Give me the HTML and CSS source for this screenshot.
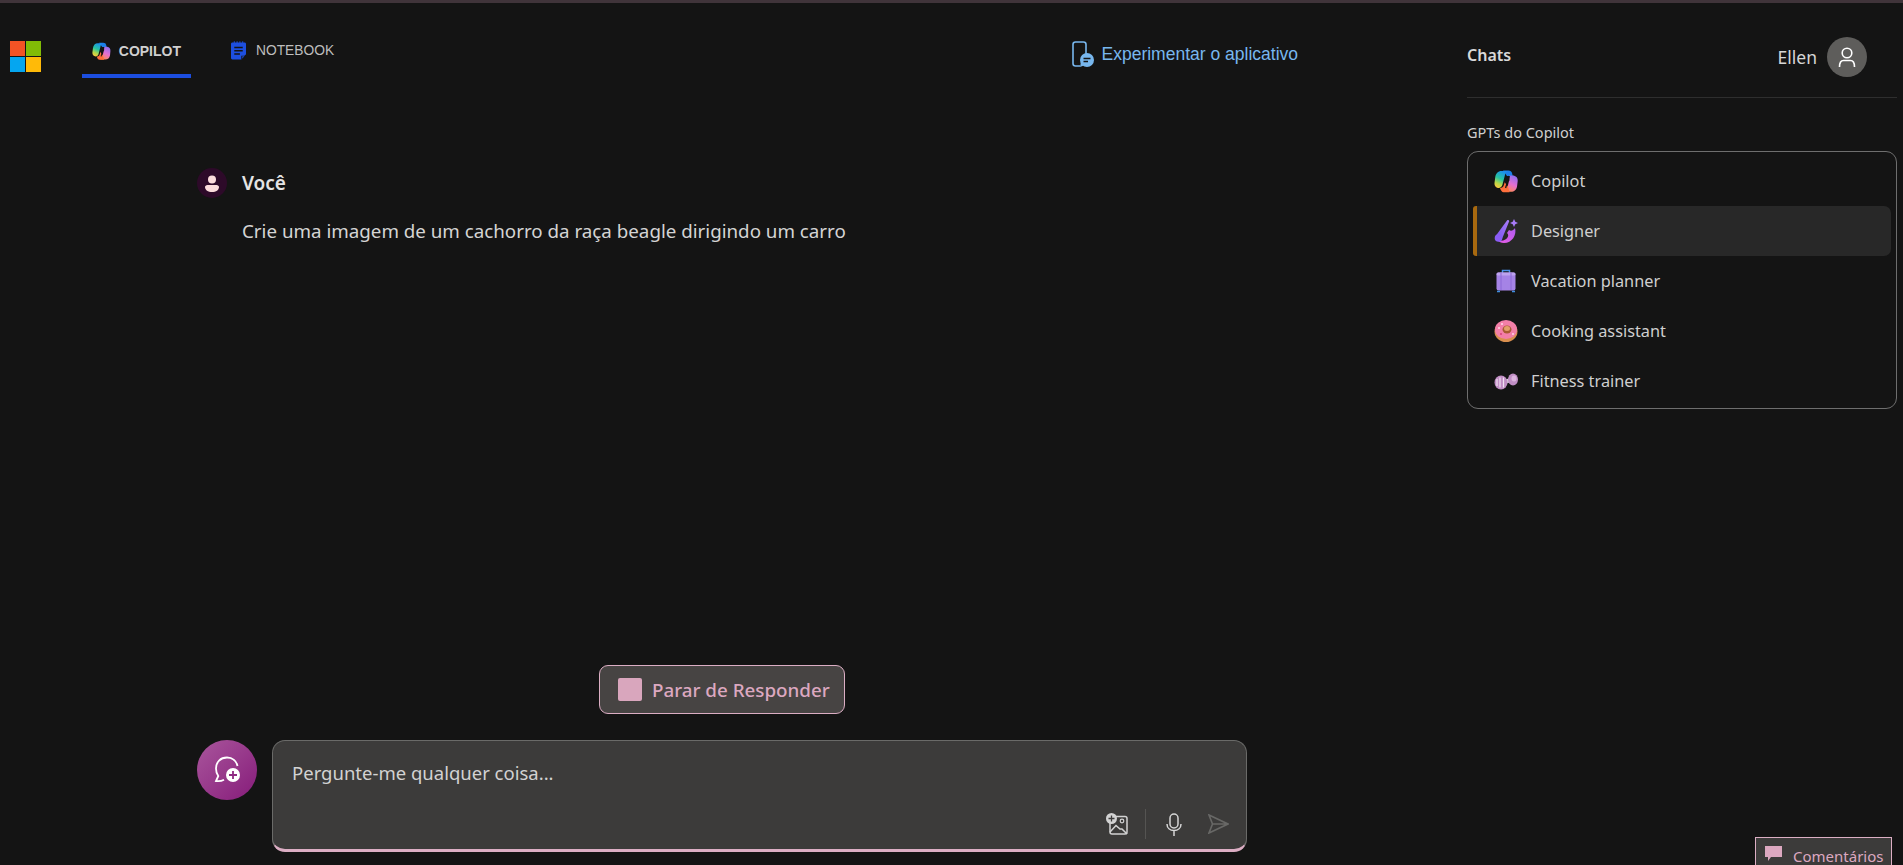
FILE: index.html
```html
<!DOCTYPE html>
<html lang="pt-BR">

<head>
    <meta charset="UTF-8">
    <title>Copilot</title>
    <link rel="stylesheet" href="styles.css">
</head>

<body>
    <svg class="defs" width="0" height="0">
        <defs>
            <linearGradient id="copLeft" x1="0.6" y1="0" x2="0.2" y2="1">
                <stop offset="0" stop-color="#1b8cf0" />
                <stop offset="0.45" stop-color="#27c4a0" />
                <stop offset="0.75" stop-color="#b7d84a" />
                <stop offset="1" stop-color="#ffc83d" />
            </linearGradient>
            <linearGradient id="copRight" x1="0.7" y1="0" x2="0.3" y2="1">
                <stop offset="0" stop-color="#8f6ff0" />
                <stop offset="0.5" stop-color="#e46fd0" />
                <stop offset="1" stop-color="#ff8a4c" />
            </linearGradient>
            <linearGradient id="wand" x1="0" y1="1" x2="1" y2="0">
                <stop offset="0" stop-color="#7d55f0" />
                <stop offset="1" stop-color="#a87cf8" />
            </linearGradient>
            <linearGradient id="bowl" x1="1" y1="0" x2="0" y2="1">
                <stop offset="0" stop-color="#b05cf0" />
                <stop offset="1" stop-color="#e95ce6" />
            </linearGradient>
            <symbol id="copilotLogo" viewBox="0 0 24 24">
                <path fill="#1b7fea" d="M9 1.500h5.500c1.800 0 3 .9 3.500 2.500l.8 3H13z" />
                <path fill="url(#copLeft)" d="M7.500 2h7c-1.500 0-2.700 1-3.200 2.800L8.500 15.500C7.900 17.800 6.500 19 4.800 19 2 19 .3 16.800 .5 14l.7-5.500C1.700 4.500 4 2 7.500 2z" />
                <path fill="url(#copRight)" d="M15.500 6.500h3c3.300 0 5.500 2.300 5.200 5.500l-.6 5c-.4 3.800-3 5.800-6.100 5.800H9.500c1.800 0 3-1 3.500-2.800l2-8c.1-.2.200-.3.500-.5z" />
                <path fill="#ff6f3c" d="M6 19c2 0 3.400-1.100 4-3.300l.7-2.500 3.300 4.500 1.500 5.600H9.500C8 23.300 6.800 21.500 6 19z" />
                <path stroke="#141414" stroke-width="1.300" d="M15.200 7l-3.600 12" />
            </symbol>
        </defs>
    </svg>

    <div class="topStrip"></div>

    <div class="page">
        <div class="mainCol">
            <div class="header">
                <svg class="msLogo" viewBox="0 0 31 31">
                    <rect width="15" height="15" fill="#f35325" />
                    <rect x="16" width="15" height="15" fill="#81bc06" />
                    <rect y="16" width="15" height="15" fill="#05a6f0" />
                    <rect x="16" y="16" width="15" height="15" fill="#ffba08" />
                </svg>
                <div class="tab tabActive">
                    <svg class="tabIcon" viewBox="0 0 24 24"><use href="#copilotLogo" /></svg>
                    <span>COPILOT</span>
                </div>
                <div class="tab">
                    <svg class="noteIcon" viewBox="0 0 16 20">
                        <path fill="#1d4fe0" d="M1.500 1.500H3V0h1v1.500h2V0h1v1.500h2V0h1v1.500h2V0h1v1.500h1.500c.8 0 1.500.7 1.500 1.500v11l-5 5.500H1.500C.7 19.500 0 18.800 0 18V3c0-.8.700-1.500 1.500-1.500z" />
                        <path fill="#141414" d="M3.500 6h9v1.500h-9zM3.500 9.500h9V11h-9zM3.500 13h6v1.500h-6zM11 19.500v-4h5z" />
                        <path fill="#1d4fe0" d="M12 18.500V16.200h2.300z" />
                    </svg>
                    <span>NOTEBOOK</span>
                </div>
                <div class="appLink">
                    <svg class="appIcon" viewBox="0 0 22 26" fill="none">
                        <path stroke="#78b7ee" stroke-width="1.600" d="M8 25H3.500C2 25 1 24 1 22.500V3.500C1 2 2 1 3.500 1h8C13 1 14 2 14 3.500V13" />
                        <circle cx="15" cy="19" r="7" fill="#78b7ee" />
                        <path fill="#78b7ee" d="M8 26l1-5 4 3z" />
                        <path stroke="#141414" stroke-width="1.500" d="M11.500 17.500h7M11.500 20.500h4.500" />
                    </svg>
                    <span>Experimentar o aplicativo</span>
                </div>
            </div>

            <div class="chat">
                <div class="msgHead">
                    <div class="youAvatar">
                        <svg width="14" height="17" viewBox="0 0 14 17">
                            <circle cx="7" cy="4.500" r="4" fill="#fbdcdc" />
                            <path fill="#fbdcdc" d="M2.500 10h9c1.400 0 2.500 1 2.500 2 0 3-3 5-7 5s-7-2-7-5c0-1 1.100-2 2.500-2z" />
                        </svg>
                    </div>
                    <span class="youName">Você</span>
                </div>
                <p class="msgText">Crie uma imagem de um cachorro da raça beagle dirigindo um carro</p>
            </div>

            <div class="composer">
                <div class="stopBtn">
                    <span class="stopSquare"></span>
                    <span>Parar de Responder</span>
                </div>
                <div class="inputRow">
                    <div class="newTopic">
                        <svg width="28" height="28" viewBox="0 0 28 28" fill="none">
                            <path stroke="#fff" stroke-width="1.800" d="M14 1.500C7.500 1.500 3 6 3 12.500c0 3 .8 5.500 2.300 7.500L3 25c3 .4 6-.2 8-1.300" />
                            <path stroke="#fff" stroke-width="1.800" d="M14 1.500c5.500 0 9.500 3.500 10.500 8.500" />
                            <circle cx="20" cy="19" r="7" fill="#fff" />
                            <path stroke="#8f2a82" stroke-width="1.800" d="M20 15v8M16 19h8" />
                        </svg>
                    </div>
                    <div class="inputBox">
                        <div class="placeholder">Pergunte-me qualquer coisa...</div>
                        <div class="actions">
                            <svg class="imgIcon" viewBox="0 0 22 22" fill="none">
                                <rect x="4" y="3.500" width="17" height="17.500" rx="2" stroke="#d2d2d2" stroke-width="1.500" />
                                <path stroke="#d2d2d2" stroke-width="1.500" d="M4 19l6-6.500 4 3.500 2 0 5 5" />
                                <circle cx="16" cy="8" r="1.800" stroke="#d2d2d2" stroke-width="1.200" />
                                <circle cx="5.500" cy="5.500" r="5.500" fill="#d2d2d2" />
                                <path stroke="#3c3b3a" stroke-width="1.300" d="M5.500 2.500v6M2.500 5.500h6" />
                            </svg>
                            <span class="actionSep"></span>
                            <svg class="micIcon" viewBox="0 0 16 23" fill="none" stroke="#d6d6d6" stroke-width="1.500">
                                <rect x="4" y="1" width="8" height="14" rx="4" />
                                <path d="M1 11c0 4 3 6.500 7 6.500s7-2.500 7-6.500M8 17.500V23" />
                            </svg>
                            <svg class="sendIcon" viewBox="0 0 21 20" fill="none" stroke="#686866" stroke-width="1.600">
                                <path d="M1 1l19 9-19 9 3.500-9zM4.500 10H20" />
                            </svg>
                        </div>
                    </div>
                </div>
            </div>
        </div>

        <div class="side">
            <div class="sideHead">
                <span class="chatsTitle">Chats</span>
                <span class="userName">Ellen</span>
                <div class="userAvatar">
                    <svg width="20" height="20" viewBox="0 0 20 20" fill="none" stroke="#fff" stroke-width="1.600">
                        <circle cx="10" cy="6" r="4.800" />
                        <path d="M2.500 20c0-4 1.500-6.500 4-6.500h7c2.500 0 4 2.500 4 6.500" />
                    </svg>
                </div>
            </div>
            <div class="gptLabel">GPTs do Copilot</div>
            <div class="gptCard">
                <div class="gptRow">
                    <svg class="gptIcon" viewBox="0 0 24 24"><use href="#copilotLogo" /></svg>
                    <span>Copilot</span>
                </div>
                <div class="gptRow gptActive">
                    <svg class="gptIcon" viewBox="0 0 24 24">
                        <path fill="url(#bowl)" d="M21 9c2 7-3 15-11 15-3 0-5-1-6-2.500 5 1 9-1 10-4 .5-1.500 0-2.500-1-3.500l2-3c2 1.200 4 .8 6-2z" />
                        <path fill="url(#wand)" d="M2 16.500L13 1.500c.8-1 2.500-.2 2.100 1L8 20z" />
                        <circle cx="4.500" cy="19" r="3.800" fill="#8a5cf5" />
                        <path fill="#a87cf8" d="M20 0l1.300 2.700L24 4l-2.700 1.300L20 8l-1.300-2.700L16 4l2.700-1.300z" />
                    </svg>
                    <span>Designer</span>
                </div>
                <div class="gptRow">
                    <svg class="gptIcon" viewBox="0 0 24 24" fill="none">
                        <path stroke="#4a90e8" stroke-width="1.500" d="M8.500 4V1.500h7V4" />
                        <rect x="2.500" y="3.500" width="19" height="18" rx="2" fill="#a583e6" />
                        <rect x="2.500" y="3.500" width="19" height="3" rx="1.500" fill="#bda2ee" />
                        <path stroke="#8c69d6" d="M7 4v17M17 4v17" />
                        <path stroke="#3f8fe0" stroke-width="1.500" d="M3 22.500h3M18 22.500h3" />
                    </svg>
                    <span>Vacation planner</span>
                </div>
                <div class="gptRow">
                    <svg class="gptIcon" viewBox="0 0 24 24">
                        <ellipse cx="12" cy="12.500" rx="11.500" ry="10.500" fill="#d98f4e" />
                        <ellipse cx="12" cy="10.500" rx="11" ry="9.500" fill="#f37fa8" />
                        <ellipse cx="13" cy="10.500" rx="4.500" ry="4" fill="#a85a32" />
                        <ellipse cx="13" cy="9.500" rx="3" ry="2.500" fill="#e4a06a" />
                        <circle cx="5" cy="9" r="1" fill="#ffd7e6" />
                        <circle cx="8" cy="5" r="1" fill="#ffd7e6" />
                        <circle cx="19" cy="15" r="1" fill="#ffd7e6" />
                        <circle cx="7" cy="15" r="1" fill="#d63f7c" />
                    </svg>
                    <span>Cooking assistant</span>
                </div>
                <div class="gptRow">
                    <svg class="gptIcon" viewBox="0 0 24 24">
                        <path stroke="#d8d0dc" stroke-width="4" d="M10 13l7-2" />
                        <ellipse cx="7" cy="13.500" rx="6.500" ry="7" fill="#c08ec4" />
                        <path stroke="#f0dff2" stroke-width="1.200" d="M3 10v7M6 8.500v10M9.500 8.500v10" />
                        <ellipse cx="19" cy="10.500" rx="5" ry="6" fill="#c08ec4" />
                        <ellipse cx="20" cy="9.500" rx="2.500" ry="3" fill="#dcb4de" />
                    </svg>
                    <span>Fitness trainer</span>
                </div>
            </div>
        </div>
    </div>

    <div class="feedback">
        <svg width="17" height="15" viewBox="0 0 17 15">
            <path fill="#dca8c0" d="M0 0h17v11H6l-3 4v-4H0z" />
        </svg>
        <span>Comentários</span>
    </div>
</body>
</html>
```

FILE: styles.css
```css
* {
    margin: 0;
    padding: 0;
    box-sizing: border-box;
}

html, body {
    height: 100%;
    overflow: hidden;
}

body {
    background-color: #141414;
    color: #d4d4d4;
    font-family: "Noto Sans", "Liberation Sans", sans-serif;
    display: flex;
    flex-direction: column;
}

.defs {
    position: absolute;
}

.topStrip {
    height: 3px;
    background-color: #40343a;
}

.page {
    flex: 1;
    display: flex;
    min-height: 0;
}

.mainCol {
    width: 1467px;
    display: flex;
    flex-direction: column;
}

.header {
    height: 75px;
    display: flex;
    align-items: flex-end;
    padding-left: 10px;
    padding-right: 169px;
    font-family: "Liberation Sans", sans-serif;
}

.msLogo {
    width: 31px;
    height: 31px;
    margin-bottom: 6px;
}

.tab {
    height: 51px;
    display: flex;
    align-items: center;
    gap: 10px;
    padding: 0 10px;
    margin-left: 30px;
    border-bottom: 4px solid transparent;
    font-size: 13.8px;
    color: #bdbdbd;
}

.tabActive {
    width: 109px;
    margin-left: 41px;
    gap: 8px;
    border-bottom-color: #1c4ee0;
    font-weight: bold;
    font-size: 14px;
    color: #d0d0d0;
}

.tabIcon {
    width: 20px;
    height: 20px;
}

.noteIcon {
    width: 15px;
    height: 19px;
}

.appLink {
    margin-left: auto;
    margin-bottom: 11px;
    display: flex;
    align-items: center;
    gap: 8px;
    color: #78b7ee;
    font-size: 17.5px;
}

.appIcon {
    width: 22px;
    height: 26px;
}

.chat {
    flex: 1;
    padding: 90px 0 0 197px;
}

.msgHead {
    display: flex;
    align-items: center;
    gap: 15px;
}

.youAvatar {
    width: 30px;
    height: 30px;
    border-radius: 50%;
    background-color: #2d0a29;
    display: flex;
    align-items: center;
    justify-content: center;
}

.youName {
    font-size: 19px;
    font-weight: 600;
    color: #e4e4e4;
}

.msgText {
    margin: 21px 0 0 45px;
    font-size: 18.75px;
    line-height: 24px;
}

.composer {
    width: 1050px;
    margin-left: 197px;
    padding-bottom: 13px;
    display: flex;
    flex-direction: column;
}

.stopBtn {
    align-self: center;
    width: 246px;
    height: 49px;
    display: flex;
    align-items: center;
    gap: 10px;
    padding-left: 18px;
    border: 1px solid #dcaec4;
    border-radius: 9px;
    background-color: #474443;
    color: #dca8c0;
    font-size: 18.8px;
    font-weight: 500;
}

.stopSquare {
    width: 24px;
    height: 23px;
    border-radius: 2px;
    background-color: #d9a6bd;
}

.inputRow {
    display: flex;
    gap: 15px;
    margin-top: 26px;
}

.newTopic {
    width: 60px;
    height: 60px;
    border-radius: 50%;
    background: linear-gradient(135deg, #a9569c, #861c7a);
    display: flex;
    align-items: center;
    justify-content: center;
}

.inputBox {
    flex: 1;
    height: 112px;
    display: flex;
    flex-direction: column;
    justify-content: space-between;
    padding: 20px 17px 10px 19px;
    border: 1px solid #6a6a68;
    border-bottom: 3px solid #dcaec4;
    border-radius: 13px;
    background-color: #3c3b3a;
}

.placeholder {
    font-size: 18.5px;
    line-height: 24px;
    color: #d2d2d2;
}

.actions {
    display: flex;
    justify-content: flex-end;
    align-items: center;
}

.imgIcon {
    width: 22px;
    height: 22px;
}

.actionSep {
    width: 1px;
    height: 30px;
    margin: 0 20px 0 17px;
    background-color: #555452;
}

.micIcon {
    width: 16px;
    height: 23px;
    margin-right: 26px;
}

.sendIcon {
    width: 21px;
    height: 20px;
}

.side {
    width: 430px;
}

.sideHead {
    height: 95px;
    display: flex;
    align-items: flex-start;
    padding: 34px 30px 0 0;
    border-bottom: 1px solid #2e2e2e;
}

.chatsTitle {
    font-size: 16px;
    font-weight: 600;
    line-height: 36px;
    color: #d8d8d8;
}

.userName {
    margin-left: auto;
    margin-right: 10px;
    font-size: 17.5px;
    line-height: 40px;
    color: #d6d6d6;
}

.userAvatar {
    width: 40px;
    height: 40px;
    border-radius: 50%;
    background-color: #5e5d5b;
    display: flex;
    align-items: center;
    justify-content: center;
}

.gptLabel {
    margin-top: 24px;
    font-size: 14.5px;
    line-height: 20px;
    color: #cfcfcf;
}

.gptCard {
    margin-top: 9px;
    padding: 4px 5px 2px;
    border: 1px solid #6e6e6e;
    border-radius: 11px;
}

.gptRow {
    height: 50px;
    display: flex;
    align-items: center;
    gap: 13px;
    padding-left: 17px;
    border-left: 4px solid transparent;
    font-size: 16.3px;
    color: #cfcfcf;
}

.gptActive {
    background-color: #282828;
    border-left-color: #a8690f;
    border-radius: 3px 7px 7px 3px;
}

.gptIcon {
    width: 24px;
    height: 24px;
}

.feedback {
    position: fixed;
    left: 1755px;
    top: 837px;
    width: 137px;
    height: 40px;
    display: flex;
    align-items: flex-start;
    gap: 11px;
    padding: 8px 0 0 9px;
    border: 1px solid #dcaec4;
    background-color: #3c3b3a;
    color: #dca8c0;
    font-size: 15px;
    line-height: 20px;
}
```
